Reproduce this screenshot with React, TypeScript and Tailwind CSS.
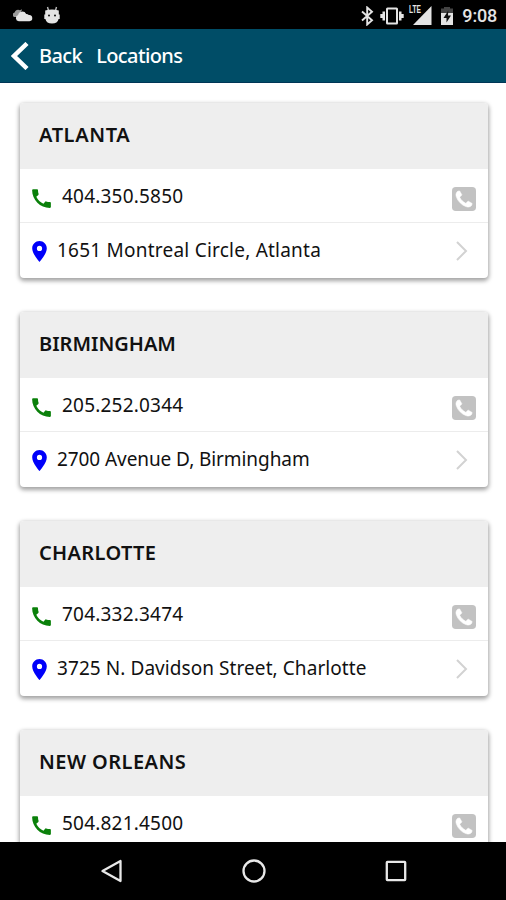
import { MdCall, MdPlace } from "react-icons/md";

type Location = {
  city: string;
  phone: string;
  address?: string;
  cityClass: string;
  addressClass?: string;
};

const locations: Location[] = [
  {
    city: "ATLANTA",
    phone: "404.350.5850",
    address: "1651 Montreal Circle, Atlanta",
    cityClass: "tracking-[0.6px]",
    addressClass: "tracking-[0.23px]",
  },
  {
    city: "BIRMINGHAM",
    phone: "205.252.0344",
    address: "2700 Avenue D, Birmingham",
    cityClass: "tracking-[0px]",
    addressClass: "tracking-[-0.08px]",
  },
  {
    city: "CHARLOTTE",
    phone: "704.332.3474",
    address: "3725 N. Davidson Street, Charlotte",
    cityClass: "tracking-[0.35px]",
    addressClass: "tracking-[0.07px]",
  },
  { city: "NEW ORLEANS", phone: "504.821.4500", cityClass: "tracking-[0.45px]" },
];

function StatusBar() {
  return (
    <div className="flex h-[29px] shrink-0 items-center bg-black text-[#e4e4e4]">
      <svg width="20" height="15" viewBox="0 0 20 15" className="ml-[13px] mt-[2px]" aria-hidden="true">
        <path d="M1 9a2.5 2.5 0 0 1 .6-4.6A3.6 3.6 0 0 1 7 2.200l2-.9-.6 2.200L3.600 9z" fill="#999" />
        <path d="M5.800 13.200a3.200 3.200 0 0 1-.8-6.200 4.400 4.400 0 0 1 8.200-1 3.400 3.400 0 0 1 2.600 1 3.100 3.100 0 0 1 .7 6.200z" fill="currentColor" />
      </svg>
      <svg width="18" height="20" viewBox="0 0 18 20" className="ml-[10px]" aria-hidden="true">
        <path d="M4.500 2l1 3.500M13.500 2l-1 3.500" stroke="#bbb" strokeWidth="1.400" />
        <path d="M2.200 5.500Q9 3.500 15.800 5.500v4h.9V14h-1.100q-1 4.500-6.600 4.500T2.400 14H1.300V9.500h.9z" fill="currentColor" />
        <circle cx="6" cy="10.500" r="1" fill="#111" />
        <circle cx="12" cy="10.500" r="1" fill="#111" />
      </svg>
      <div className="ml-auto flex items-center pr-[9px]">
        <svg width="14" height="20" viewBox="0 0 14 20" fill="none" className="mr-[6px] mt-[2px]" aria-hidden="true">
          <path d="M2 5.500 12 14.300 7.200 18.500V1.500L12 5.700 2 14.500" stroke="currentColor" strokeWidth="1.900" />
        </svg>
        <svg width="24" height="20" viewBox="0 0 24 20" className="mt-[2px]" aria-hidden="true">
          <rect x="7" y="2.500" width="10" height="15" rx="0.500" fill="none" stroke="currentColor" strokeWidth="2" />
          <path d="M2.500 5.500H5v9H2.500zM19 5.500h2.500v9H19zM.3 8h2.200v4H.3zM21.500 8h2.200v4h-2.200z" fill="currentColor" />
        </svg>
        <svg width="26" height="22" viewBox="0 0 26 22" className="ml-[4px] mt-px" aria-hidden="true">
          <path d="M23.500 2v19H5z" fill="currentColor" />
          <path d="M0 0h13.500v11H0z" fill="#000" />
          <text x="1" y="9" fontSize="10" fontWeight="700" fill="currentColor" textLength="12" lengthAdjust="spacingAndGlyphs" className="font-['Liberation_Sans']">LTE</text>
        </svg>
        <svg width="14" height="20" viewBox="0 0 14 20" className="ml-[6px] mt-[3px]" aria-hidden="true">
          <path d="M1 7V2.500h3V1h6v1.500h3V7z" fill="#444" />
          <path d="M1 7h12v12H1z" fill="currentColor" />
          <path d="M8.300 4.500 3.500 12h3v4.500L11 9.500H8z" fill="#111" />
        </svg>
        <span className="ml-[8px] mt-[2px] font-['Roboto',sans-serif] text-[18px] font-medium leading-none tracking-[-0.2px]">
          9:08
        </span>
      </div>
    </div>
  );
}

function CallBadge() {
  return (
    <svg width="24" height="24" viewBox="0 0 1536 1536" aria-hidden="true">
      <rect width="1536" height="1536" rx="240" fill="#c2c2c2" />
      <path
        transform="translate(0 1408) scale(1 -1)"
        fill="#fff"
        stroke="#fff"
        strokeWidth="40"
        d="M1280 343q0 11-2 16-3 8-38.500 29.500t-88.500 49.500l-53 29q-5 3-19 13t-25 15-21 5q-18 0-47-32.500t-57-65.500-44-33q-7 0-16.500 3.500t-15.500 6.500-17 9.500-14 8.500q-99 55-170 126.500t-127 170.500q-2 3-8.500 14t-9.500 17-6.500 15.500-3.500 16.500q0 13 20.500 33.500t45 38.500 45 39.500 20.500 36.500q0 10-5 21t-15 25-13 19q-3 6-15 28.500t-25 45.500-26.500 47.500-25 40.500-16.500 18-16 2q-48 0-101-22-46-21-80-94.500t-34-130.500q0-16 2.500-34t5-30.500 9-33 10-29.500 12.500-33 11-30q60-164 216.500-320.500t320.500-216.500q6-2 30-11t33-12.500 29.500-10 33-9 30.500-5 34-2.500q57 0 130.500 34t94.500 80q22 53 22 101z"
      />
    </svg>
  );
}

function LocationCard({ city, phone, address, cityClass, addressClass }: Location) {
  return (
    <section className="h-[175px] shrink-0 overflow-hidden rounded-[4px] bg-white shadow-[0_2px_4px_1px_rgba(0,0,0,0.36)]">
      <h2 className={`flex h-[66px] items-center bg-[#eee] pl-[19px] pb-[3px] text-[20px] font-semibold ${cityClass}`}>
        {city}
      </h2>
      <div className="flex h-[54px] items-center border-b border-[#ececec] pl-[9px] pr-[12px]">
        <MdCall className="mt-[5px] h-[25px] w-[25px] text-[#0a800a]" />
        <span className="ml-[8px] mt-[2px] flex-1 text-[19px] tracking-[0.2px]">{phone}</span>
        <div className="mt-[6px]">
          <CallBadge />
        </div>
      </div>
      {address && (
        <div className="flex h-[55px] items-center pl-[7px] pr-[20px]">
          <MdPlace className="mt-[2px] h-[25px] w-[25px] text-[#0000fa]" />
          <span className={`ml-[5px] flex-1 whitespace-nowrap text-[19px] ${addressClass}`}>{address}</span>
          <svg width="13" height="20" viewBox="0 0 13 20" className="mt-px" fill="none" aria-hidden="true">
            <path d="M2 1l9 9-9 9" stroke="#d2d2d2" strokeWidth="2" />
          </svg>
        </div>
      )}
    </section>
  );
}

function NavBar() {
  return (
    <nav className="flex h-[58px] shrink-0 items-center justify-between bg-black pl-[100px] pr-[98px]">
      <svg width="24" height="26" viewBox="0 0 24 26" fill="none" aria-label="Back">
        <path d="M20.500 3v20L2.500 13z" stroke="#e8e8e8" strokeWidth="2.300" strokeLinejoin="round" />
      </svg>
      <svg width="26" height="26" viewBox="0 0 26 26" fill="none" aria-label="Home">
        <circle cx="13" cy="13" r="10.500" stroke="#e8e8e8" strokeWidth="2.300" />
      </svg>
      <svg width="24" height="26" viewBox="0 0 24 26" fill="none" aria-label="Recent apps">
        <rect x="2.800" y="3.800" width="18.400" height="18.400" rx="0.600" stroke="#e8e8e8" strokeWidth="2.300" />
      </svg>
    </nav>
  );
}

export default function App() {
  return (
    <div className="flex h-[900px] w-[506px] flex-col overflow-hidden bg-white font-['Noto_Sans',sans-serif] text-[#111]">
      <StatusBar />
      <header className="flex h-[54px] shrink-0 items-center border-b border-[#003656] bg-[#004d67] pl-[11px] text-[20px] font-medium text-white">
        <svg width="18" height="28" viewBox="0 0 18 28" fill="none" aria-hidden="true">
          <path d="M16 1.500 3 14l13 12.500" stroke="#fff" strokeWidth="4.500" />
        </svg>
        <span className="ml-[10px] mt-px tracking-[-0.6px]">Back</span>
        <h1 className="ml-[14px] mt-px tracking-[-0.6px]">Locations</h1>
      </header>
      <main className="flex min-h-0 flex-1 flex-col gap-[34px] overflow-hidden pt-[20px] pl-[20px] pr-[18px]">
        {locations.map((location) => (
          <LocationCard key={location.city} {...location} />
        ))}
      </main>
      <NavBar />
    </div>
  );
}
